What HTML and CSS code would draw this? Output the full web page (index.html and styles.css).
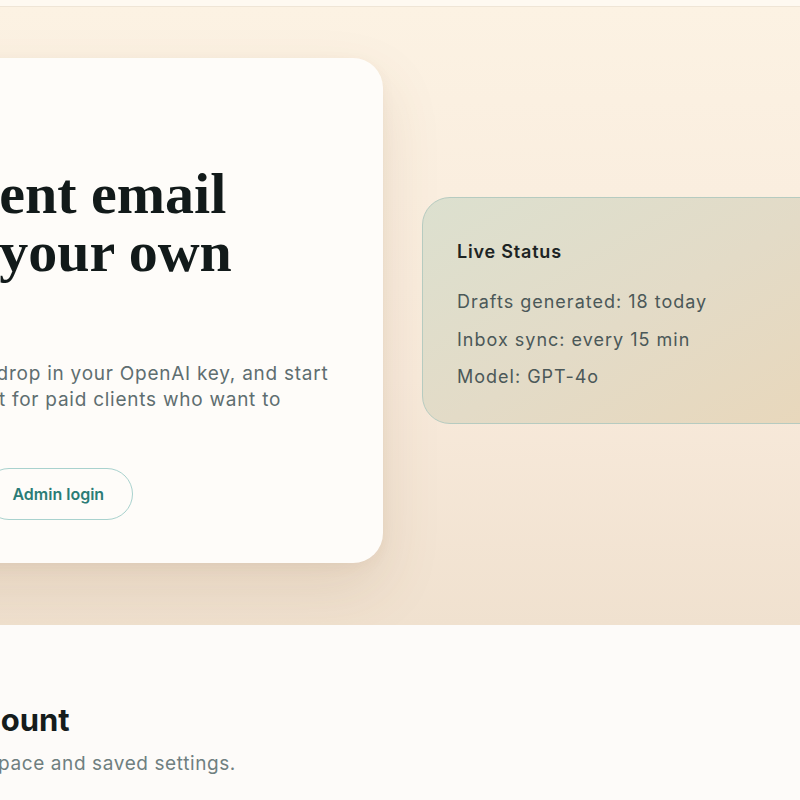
FILE: index.html
```html
<!DOCTYPE html>
<html lang="en">
<head>
<meta charset="utf-8">
<title>Draftwell</title>
<link rel="stylesheet" href="styles.css">
</head>
<body>
<div class="topbar"></div>
<section class="hero">
  <div class="hero-inner">
    <div class="hero-card">
      <h1 class="hero-title">
        <span class="line">Intelligent email</span>
        <span class="line">drafts, your own</span>
        <span class="line">voice.</span>
      </h1>
      <p class="hero-text">
        <span class="line">Connect Outlook, drop in your OpenAI key, and start</span>
        <span class="line">better replies. Built for paid clients who want to</span>
        <span class="line">stay in control.</span>
      </p>
      <div class="actions">
        <a class="btn btn-primary" href="#">Get started</a>
        <a class="btn btn-outline" href="#">Admin login</a>
      </div>
    </div>
    <aside class="status">
      <h2 class="status-title">Live Status</h2>
      <ul class="status-list">
        <li>Drafts generated: 18 today</li>
        <li>Inbox sync: every 15 min</li>
        <li>Model: GPT-4o</li>
      </ul>
    </aside>
  </div>
</section>
<section class="account">
  <div class="account-inner">
    <h2 class="account-title">My account</h2>
    <p class="account-text">Your workspace and saved settings.</p>
  </div>
</section>
</body>
</html>
```
FILE: styles.css
```css
html, body {
  margin: 0;
  padding: 0;
}
body {
  background: #fdfbf9;
  font-family: Inter, "Liberation Sans", sans-serif;
  overflow: hidden;
  width: 800px;
  height: 800px;
}
.topbar {
  height: 6px;
  background: #fef9f1;
  border-bottom: 1px solid #efe5d6;
}
.hero {
  background: linear-gradient(180deg, #fcf2e3 0%, #f8eadb 60%, #f0e1cf 100%);
  padding: 51px 0 62px;
  overflow: hidden;
}
.hero-inner {
  display: flex;
  align-items: center;
  gap: 39px;
  margin-left: -250px;
}
.hero-card {
  flex: none;
  width: 633px;
  box-sizing: border-box;
  padding: 107px 40px 43px 72px;
  background: #fefcf9;
  border-radius: 30px;
  box-shadow: 0 26px 60px rgba(120, 88, 48, 0.13), 0 4px 14px rgba(120, 88, 48, 0.05);
}
.line {
  display: block;
  white-space: nowrap;
}
.hero-title {
  margin: 0;
  font-family: "Liberation Serif", serif;
  font-weight: 700;
  font-size: 58px;
  line-height: 58px;
  color: #121a1a;
}
.hero-text {
  margin: 22px 0 0;
  font-size: 19px;
  line-height: 26px;
  letter-spacing: 0.75px;
  color: #5e6e70;
}
.actions {
  display: flex;
  gap: 19px;
  margin-top: 29px;
}
.btn {
  display: inline-flex;
  align-items: center;
  height: 52px;
  box-sizing: border-box;
  padding: 0 28px;
  border-radius: 26px;
  font-size: 16px;
  font-weight: 600;
  text-decoration: none;
}
.btn-primary {
  background: #2b7c76;
  color: #fff;
}
.btn-outline {
  border: 1px solid #a9d2ce;
  color: #2b7c76;
}
.status {
  flex: none;
  width: 440px;
  box-sizing: border-box;
  padding: 42px 34px 33px;
  border: 1px solid #b6cbc0;
  border-radius: 28px;
  background: linear-gradient(150deg, #dce0cf 0%, #e3dbc7 50%, #e9d7ba 100%);
}
.status-title {
  margin: 0;
  font-size: 18px;
  line-height: 24px;
  font-weight: 600;
  letter-spacing: 0.8px;
  color: #1d2424;
}
.status-list {
  list-style: none;
  margin: 25px 0 0;
  padding: 0;
  display: flex;
  flex-direction: column;
  gap: 11.5px;
}
.status-list li {
  font-size: 18px;
  line-height: 26px;
  letter-spacing: 1px;
  color: #4b5858;
}
.account {
  padding: 76px 0 40px;
}
.account-inner {
  margin-left: -109px;
}
.account-title {
  margin: 0;
  font-size: 31px;
  line-height: 38px;
  font-weight: 700;
  color: #151c1c;
  white-space: nowrap;
}
.account-text {
  margin: 12px 0 0;
  font-size: 19px;
  line-height: 26px;
  letter-spacing: 0.6px;
  color: #6f7f80;
  white-space: nowrap;
}
```
